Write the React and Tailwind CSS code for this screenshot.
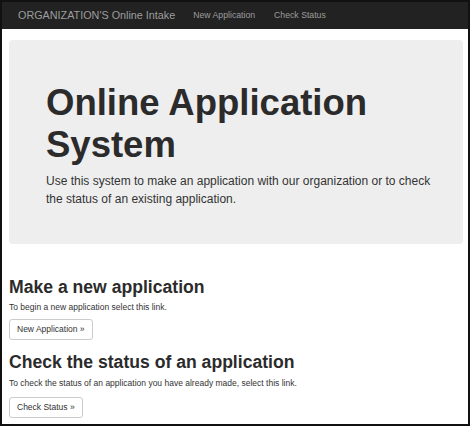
import React from 'react';

export default function App() {
  return (
    <div className="w-[470px] h-[426px] border-2 border-[#111] bg-white overflow-hidden font-['Liberation_Sans',Arial,sans-serif] text-[#333]">
      {/* Navbar */}
      <nav className="h-[27px] bg-[#222] flex items-center pl-[16px] text-[#9d9d9d]">
        <span className="text-[10.8px] leading-none">ORGANIZATION'S Online Intake</span>
        <a className="ml-[18px] text-[8.7px] leading-none">New Application</a>
        <a className="ml-[19px] text-[8.7px] leading-none">Check Status</a>
      </nav>

      <div className="pl-[7px] pr-[5px]">
        {/* Jumbotron */}
        <div className="mt-[11px] bg-[#eee] rounded-[4px] pl-[37px] pr-[30px] pt-[42px] pb-[36px]">
          <h1 className="text-[36.5px] leading-[42px] font-bold text-[#2b2b2b]">Online Application System</h1>
          <p className="mt-[6px] text-[12px] leading-[18px]">
            Use this system to make an application with our organization or to check the status of an existing application.
          </p>
        </div>

        {/* Make a new application */}
        <h2 className="mt-[33px] text-[17.6px] leading-[20px] font-bold text-[#2b2b2b]">Make a new application</h2>
        <p className="mt-[4px] text-[8.5px] leading-[12px]">To begin a new application select this link.</p>
        <button className="mt-[6px] h-[21px] px-[7px] border border-[#ccc] rounded-[3px] bg-white text-[8.5px] text-[#333]">
          New Application &raquo;
        </button>

        {/* Check status */}
        <h2 className="mt-[12px] text-[17.6px] leading-[20px] font-bold text-[#2b2b2b]">Check the status of an application</h2>
        <p className="mt-[5px] text-[8.5px] leading-[12px]">To check the status of an application you have already made, select this link.</p>
        <button className="mt-[8px] h-[21px] px-[7px] border border-[#ccc] rounded-[3px] bg-white text-[8.5px] text-[#333]">
          Check Status &raquo;
        </button>
      </div>
    </div>
  );
}
